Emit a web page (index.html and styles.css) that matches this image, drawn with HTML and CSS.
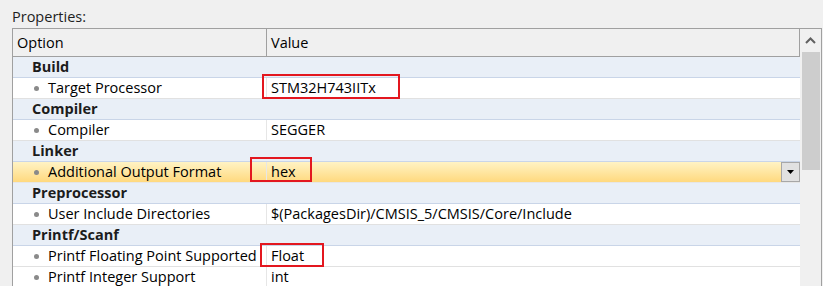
FILE: index.html
```html
<!DOCTYPE html>
<html lang="en">
<head>
    <meta charset="UTF-8">
    <title>Properties</title>
    <link rel="stylesheet" href="styles.css">
</head>
<body>
    <div class="caption">Properties:</div>

    <div class="panel">
        <div class="grid">
            <div class="head">
                <div class="col-option">Option</div>
                <div class="col-value">Value</div>
            </div>

            <div class="category">Build</div>
            <div class="item">
                <div class="col-option"><span class="dot"></span>Target Processor</div>
                <div class="col-value">STM32H743IITx<span class="mark mark-target"></span></div>
            </div>

            <div class="category">Compiler</div>
            <div class="item">
                <div class="col-option"><span class="dot"></span>Compiler</div>
                <div class="col-value">SEGGER</div>
            </div>

            <div class="category">Linker</div>
            <div class="item selected">
                <div class="col-option"><span class="dot"></span>Additional Output Format</div>
                <div class="col-value">hex<span class="mark mark-hex"></span>
                    <span class="drop">
                        <svg width="7" height="4" viewBox="0 0 7 4"><path d="M0 0h7L3.5 4z" fill="#000"/></svg>
                    </span>
                </div>
            </div>

            <div class="category">Preprocessor</div>
            <div class="item">
                <div class="col-option"><span class="dot"></span>User Include Directories</div>
                <div class="col-value">$(PackagesDir)/CMSIS_5/CMSIS/Core/Include</div>
            </div>

            <div class="category">Printf/Scanf</div>
            <div class="item">
                <div class="col-option"><span class="dot"></span>Printf Floating Point Supported</div>
                <div class="col-value">Float<span class="mark mark-float"></span></div>
            </div>
            <div class="item">
                <div class="col-option"><span class="dot"></span>Printf Integer Support</div>
                <div class="col-value">int</div>
            </div>
        </div>

        <div class="scrollbar">
            <div class="arrow">
                <svg width="11" height="7" viewBox="0 0 11 7"><path d="M1 6l4.5-4.5L10 6" fill="none" stroke="#606060" stroke-width="2"/></svg>
            </div>
            <div class="thumb"></div>
        </div>
    </div>
</body>
</html>
```

FILE: styles.css
```css
body {
    margin: 0;
    height: 286px;
    background: #f0f0f0;
    font-family: 'Open Sans', 'Noto Sans', sans-serif;
    font-size: 14.5px;
    color: #000;
    overflow: hidden;
}

.caption {
    padding: 8px 12px 0;
    line-height: 18px;
    color: #1e1e1e;
}

.panel {
    display: flex;
    margin: 2px 0 0 12px;
    width: 808px;
    height: 257px;
    overflow: hidden;
    border: 1px solid #a0a0a0;
    border-bottom: none;
    background: #ffffff;
}

.grid {
    width: 787px;
    display: flex;
    flex-direction: column;
    flex-shrink: 0;
}

.head {
    display: flex;
    flex-shrink: 0;
    height: 27px;
    line-height: 27px;
    background: #f0f0f0;
    border-bottom: 1px solid #a0a0a0;
    border-right: 1px solid #a0a0a0;
}

.head .col-option {
    border-right: 1px solid #a0a0a0;
    padding-left: 4px;
}

.col-option {
    width: 249px;
    flex-shrink: 0;
    display: flex;
    align-items: center;
    white-space: nowrap;
}

.col-value {
    flex: 1;
    padding-left: 4px;
    position: relative;
    display: flex;
    align-items: center;
    white-space: nowrap;
}

.category {
    flex-shrink: 0;
    height: 20px;
    line-height: 20px;
    padding-left: 19px;
    font-weight: bold;
    background: #e9eff7;
    border-bottom: 1px solid #c9d5e8;
    color: #1c1c1c;
}

.item {
    display: flex;
    flex-shrink: 0;
    height: 20px;
    line-height: 20px;
    border-bottom: 1px solid #e1e1e1;
    background: #fff;
}

.item .col-option {
    padding-left: 21px;
    border-right: 1px solid #e6e6e6;
    width: 232px;
}

.item.selected {
    background: linear-gradient(#fff3c4, #ffd97e);
    border-bottom-color: #e6e6e6;
}

.dot {
    width: 5px;
    height: 5px;
    border-radius: 50%;
    background: #8a8a8a;
    margin-right: 9px;
}

.drop {
    margin-left: auto;
    width: 17px;
    height: 18px;
    background: #e1e1e1;
    border: 1px solid #a7a7a7;
    display: flex;
    align-items: center;
    justify-content: center;
}

.mark {
    position: absolute;
    border: 2px solid #e3171f;
    box-sizing: border-box;
    pointer-events: none;
}

.mark-target {
    left: -5px;
    top: -4px;
    width: 138px;
    height: 25px;
}

.mark-hex {
    left: -17px;
    top: -5px;
    width: 62px;
    height: 25px;
}

.mark-float {
    left: -7px;
    top: -3px;
    width: 64px;
    height: 24px;
}

.scrollbar {
    width: 21px;
    background: #f0f0f0;
    display: flex;
    flex-direction: column;
    align-items: center;
}

.arrow {
    height: 23px;
    display: flex;
    align-items: center;
    justify-content: center;
}

.thumb {
    width: 18px;
    height: 118px;
    background: #cdcdcd;
}
```
